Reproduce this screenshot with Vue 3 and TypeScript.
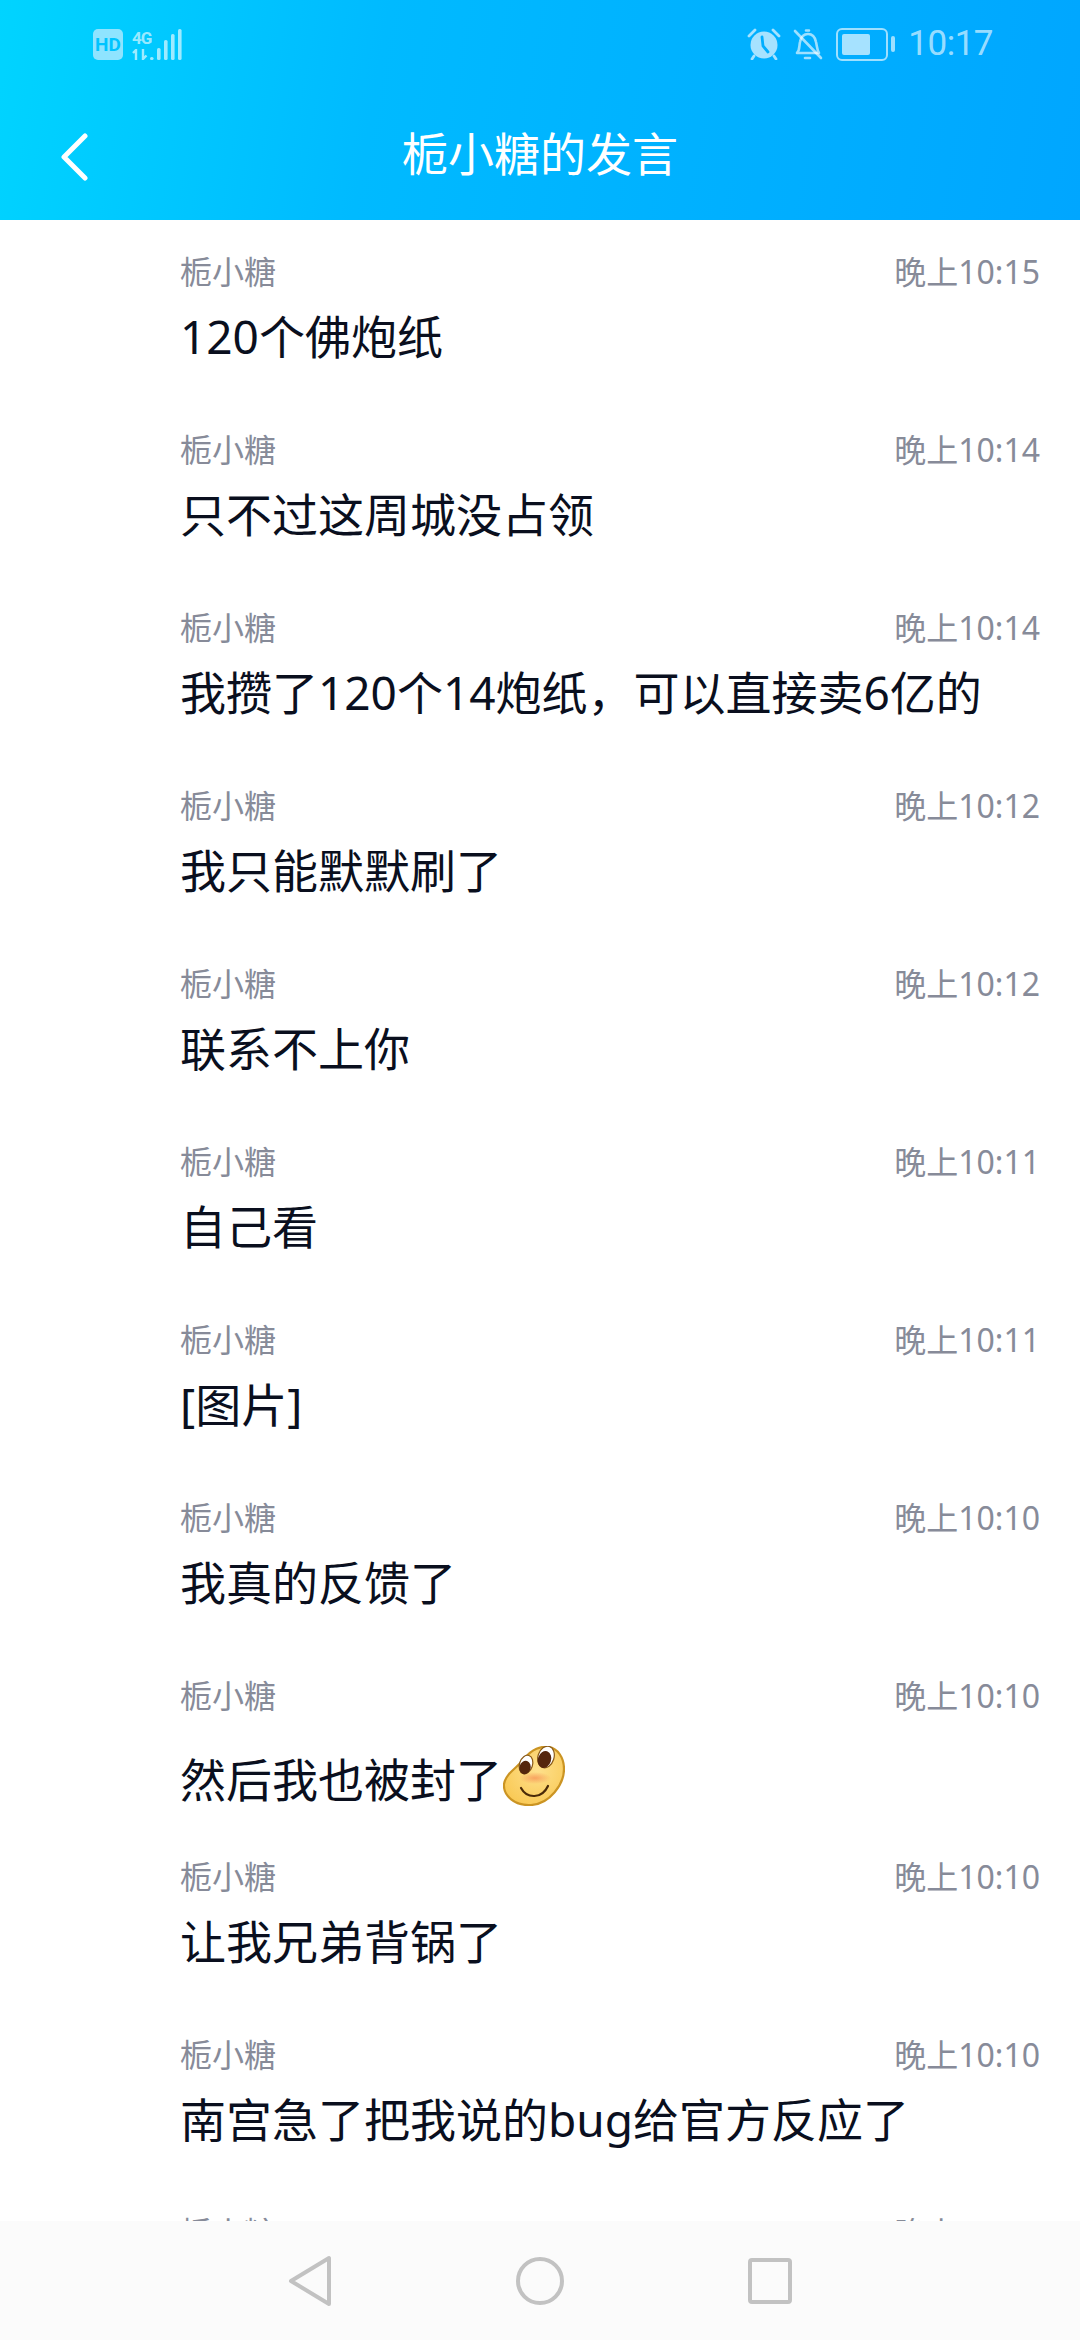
<script setup lang="ts">
interface Msg {
  time: string
  text: string
  emoji?: boolean
}

const name = '栀小糖'

const messages: Msg[] = [
  { time: '晚上10:15', text: '120个佛炮纸' },
  { time: '晚上10:14', text: '只不过这周城没占领' },
  { time: '晚上10:14', text: '我攒了120个14炮纸，可以直接卖6亿的' },
  { time: '晚上10:12', text: '我只能默默刷了' },
  { time: '晚上10:12', text: '联系不上你' },
  { time: '晚上10:11', text: '自己看' },
  { time: '晚上10:11', text: '[图片]' },
  { time: '晚上10:10', text: '我真的反馈了' },
  { time: '晚上10:10', text: '然后我也被封了', emoji: true },
  { time: '晚上10:10', text: '让我兄弟背锅了' },
  { time: '晚上10:10', text: '南宫急了把我说的bug给官方反应了' },
  { time: '晚上10:10', text: '' },
]

const signal = [
  { x: 0, h: 3 },
  { x: 7, h: 12 },
  { x: 14, h: 20 },
  { x: 21, h: 26 },
  { x: 28, h: 31 },
]
</script>

<template>
  <div class="page">
    <header class="top">
      <div class="status">
        <div class="status-left">
          <span class="hd">HD</span>
          <div class="net">
            <span class="net-label">4G</span>
            <svg class="net-arrows" width="16" height="11" viewBox="0 0 16 11">
              <path d="M4 11V1L1 4M11 0v10l3.500-3.500" fill="none" stroke="currentColor" stroke-width="2.4" />
            </svg>
          </div>
          <svg class="bars" width="32" height="31" viewBox="0 0 32 31">
            <rect v-for="b in signal" :key="b.x" :x="b.x" :y="31 - b.h" width="3.6" :height="b.h" rx="1.6" />
          </svg>
        </div>
        <div class="status-right">
          <svg width="34" height="32" viewBox="0 0 34 32">
            <circle cx="17" cy="17" r="13.5" fill="#a6e2ff" />
            <path d="M2 8l6-6M32 8l-6-6M7 28l-2 3M27 28l2 3" stroke="#a6e2ff" stroke-width="2.8" stroke-linecap="round" />
            <path d="M15 9l1 9 5 6" fill="none" stroke="#00aeff" stroke-width="2.8" stroke-linecap="round" />
          </svg>
          <svg width="30" height="33" viewBox="0 0 30 33">
            <path d="M4 25c3-3 2-7 3-11 1-5 4-8 8-8s7 3 8 8c1 4 1 8 3 11z" fill="none" stroke="currentColor" stroke-width="2.6" stroke-linejoin="round" />
            <path d="M13 2.500h3M12 30h5M2 3l26 27" stroke="currentColor" stroke-width="2.6" stroke-linecap="round" />
          </svg>
          <div class="battery">
            <div class="battery-body"><div class="battery-level" /></div>
            <div class="battery-cap" />
          </div>
          <span class="clock">10:17</span>
        </div>
      </div>
      <div class="title-bar">
        <svg class="back" width="30" height="48" viewBox="0 0 30 48">
          <path d="M26 3L5 24l21 21" fill="none" stroke="#fff" stroke-width="5" stroke-linecap="round" stroke-linejoin="round" />
        </svg>
        <h1 class="title">栀小糖的发言</h1>
      </div>
    </header>

    <main class="list">
      <div v-for="(m, i) in messages" :key="i" class="item" :class="{ 'has-emoji': m.emoji }">
        <div class="meta">
          <span>{{ name }}</span>
          <span>{{ m.time }}</span>
        </div>
        <div v-if="m.text" class="text">
          {{ m.text }}
          <svg v-if="m.emoji" class="emoji" width="62" height="60" viewBox="0 0 62 60">
            <defs>
              <radialGradient id="face" cx="55%" cy="40%" r="65%">
                <stop offset="0%" stop-color="#fee08c" />
                <stop offset="100%" stop-color="#f9c955" />
              </radialGradient>
              <radialGradient id="blush">
                <stop offset="0%" stop-color="#f79a5a" stop-opacity="0.85" />
                <stop offset="100%" stop-color="#f79a5a" stop-opacity="0" />
              </radialGradient>
            </defs>
            <path d="M1 38C3 27 14 22 22 12 29 3 38 0 45 1 55 2 61 12 61 23 61 38 47 58 28 59 12 60 0 50 1 38z" fill="url(#face)" stroke="#cb9423" stroke-width="2.200" />
            <ellipse cx="32" cy="32" rx="16" ry="6" fill="url(#blush)" />
            <ellipse cx="23" cy="18.500" rx="6.500" ry="9.500" fill="#fff" stroke="#8a5a18" stroke-width="1.200" transform="rotate(18 23 18.500)" />
            <ellipse cx="43" cy="11" rx="8" ry="11" fill="#fff" stroke="#8a5a18" stroke-width="1.200" transform="rotate(18 43 11)" />
            <ellipse cx="22" cy="21.500" rx="5.600" ry="6.800" fill="#55260d" transform="rotate(18 22 21.500)" />
            <ellipse cx="41.500" cy="13.500" rx="6.600" ry="8.600" fill="#55260d" transform="rotate(18 41.500 13.500)" />
            <path d="M18 42c6 11 21 11 27-2" fill="none" stroke="#4a2a08" stroke-width="2.200" stroke-linecap="round" />
          </svg>
        </div>
      </div>
    </main>

    <footer class="nav">
      <svg width="44" height="52" viewBox="0 0 44 52">
        <path d="M41 3v46L3 26z" fill="none" stroke="#c2c2c2" stroke-width="4" stroke-linejoin="round" />
      </svg>
      <svg width="48" height="50" viewBox="0 0 48 50">
        <circle cx="24" cy="25" r="22" fill="none" stroke="#c2c2c2" stroke-width="4" />
      </svg>
      <svg width="44" height="46" viewBox="0 0 44 46">
        <rect x="2" y="2" width="40" height="42" rx="2" fill="none" stroke="#c2c2c2" stroke-width="4" />
      </svg>
    </footer>
  </div>
</template>

<style scoped>
.page {
  display: flex;
  flex-direction: column;
  width: 1080px;
  height: 2340px;
  overflow: hidden;
  background: #fff;
  font-family: "Noto Sans", "Noto Sans CJK SC", sans-serif;
}
.top {
  flex-shrink: 0;
  height: 220px;
  background: linear-gradient(100deg, #00d4ff 0%, #00baff 35%, #00a6ff 100%);
}
.status {
  display: flex;
  justify-content: space-between;
  align-items: center;
  height: 34px;
  padding: 27px 87px 0 93px;
  color: rgba(255, 255, 255, 0.62);
}
.status-left,
.status-right {
  display: flex;
  align-items: center;
}
.hd {
  width: 30px;
  height: 31px;
  border-radius: 5px;
  background: #8fe4ff;
  color: #00c4ff;
  font-family: Roboto, sans-serif;
  font-size: 19px;
  font-weight: 700;
  line-height: 31px;
  text-align: center;
}
.net {
  display: flex;
  flex-direction: column;
  width: 18px;
  margin-left: 9px;
}
.net-label {
  height: 20px;
  font-family: Roboto, sans-serif;
  font-size: 17px;
  font-weight: 700;
  letter-spacing: -1px;
  line-height: 18px;
}
.net-arrows {
  display: block;
}
.bars {
  fill: currentColor;
}
.status-right svg {
  display: block;
}
.status-right svg:nth-child(2) {
  margin-left: 12px;
}
.battery {
  display: flex;
  align-items: center;
  margin-left: 13px;
}
.battery-body {
  box-sizing: border-box;
  width: 52px;
  height: 33px;
  padding: 4px;
  border: 2.5px solid currentColor;
  border-radius: 6px;
}
.battery-level {
  width: 28px;
  height: 100%;
  border-radius: 2px;
  background: #a6e2ff;
}
.battery-cap {
  width: 4px;
  height: 16px;
  margin-left: 3px;
  border-radius: 2px;
  background: currentColor;
}
.clock {
  margin-left: 13px;
  font-family: Roboto, sans-serif;
  font-size: 35px;
  letter-spacing: -0.5px;
  line-height: 40px;
}
.title-bar {
  position: relative;
  display: flex;
  align-items: center;
  justify-content: center;
  height: 92px;
  margin-top: 46px;
}
.back {
  position: absolute;
  left: 59px;
  top: 26px;
}
.title {
  margin: 0;
  color: #fff;
  font-size: 46px;
  font-weight: 400;
  line-height: 92px;
}
.list {
  flex: 1;
  min-height: 0;
  overflow: hidden;
  padding: 30px 40px 0 180px;
}
.item {
  padding-bottom: 58px;
}
.item.has-emoji {
  padding-bottom: 42px;
}
.meta {
  display: flex;
  justify-content: space-between;
  color: #878b99;
  font-size: 32px;
  line-height: 44px;
}
.text {
  display: flex;
  align-items: center;
  margin-top: 8px;
  color: #0a0f1e;
  font-size: 46px;
  line-height: 68px;
}
.has-emoji .text {
  margin-top: 27px;
}
.emoji {
  margin-top: -6px;
  margin-left: 1px;
}
.nav {
  flex-shrink: 0;
  display: grid;
  grid-template-columns: 48px 48px 48px;
  justify-content: center;
  justify-items: center;
  align-items: center;
  column-gap: 182px;
  height: 119px;
  background: #fbfbfb;
}
</style>
